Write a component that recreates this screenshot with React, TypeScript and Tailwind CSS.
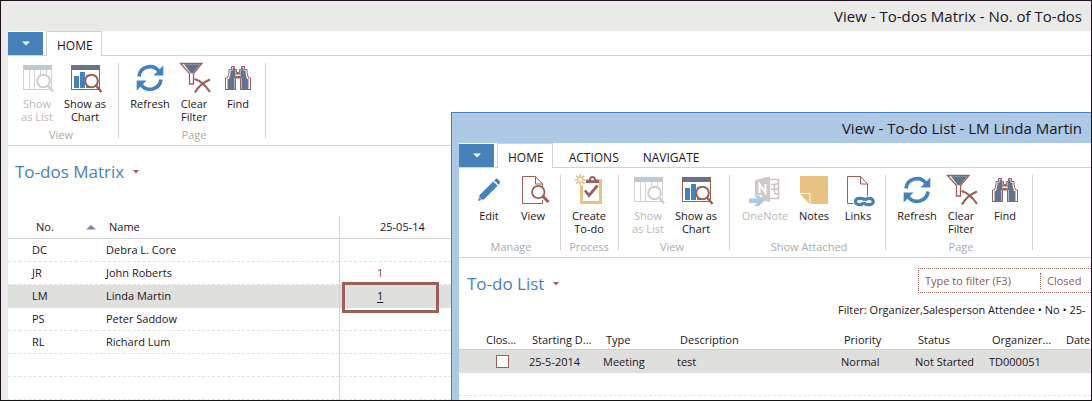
import React from "react";

const BROWN = "#9b6058";
const BLUE = "#4682b9";
const GOLD = "#e8c282";
const MIXED = "#66728c";

function Icon({ children }: { children: React.ReactNode }) {
  return (
    <svg width="32" height="28" viewBox="0 0 32 28" fill="none" aria-hidden="true" className="block overflow-visible">
      {children}
    </svg>
  );
}

function ListIcon() {
  return (
    <Icon>
      <rect x="2.5" y="1.5" width="28" height="24" stroke="#d2d2d2" />
      <rect x="2" y="1" width="29" height="5" fill="#c3c9d3" />
      <path d="M8.5 6V25M13.5 6V25M19.5 6V12M25.5 6V10" stroke="#d2d2d2" />
      <circle cx="22.5" cy="17" r="6.3" fill="#fff" stroke="#cfcfcf" strokeWidth="2" />
      <path d="M27 21.5L32 27.5" stroke="#cfcfcf" strokeWidth="2.5" />
    </Icon>
  );
}

function ChartIcon() {
  return (
    <Icon>
      <rect x="2.5" y="1.5" width="28" height="24" stroke={BROWN} />
      <rect x="3" y="2" width="27" height="3.5" fill={MIXED} />
      <path d="M3 5.5H30" stroke={BROWN} />
      <path d="M5 12h5v12H5zM11 8h5v16h-5zM17 11h5v13h-5z" fill={BLUE} />
      <circle cx="22.5" cy="17" r="6.3" fill="#fff" stroke={BROWN} strokeWidth="2" />
      <path d="M27 21.5L32.5 28" stroke={BROWN} strokeWidth="2.5" />
    </Icon>
  );
}

function RefreshIcon() {
  return (
    <Icon>
      <path d="M5 12.5A11 11 0 0 1 25 7.5" stroke={BLUE} strokeWidth="3.6" />
      <path d="M19.5 11.5H29.3V1.5z" fill={BLUE} />
      <path d="M27 15.5A11 11 0 0 1 7 20.5" stroke={BLUE} strokeWidth="3.6" />
      <path d="M12.5 16.5H2.7V26.5z" fill={BLUE} />
    </Icon>
  );
}

function ClearFilterIcon() {
  return (
    <Icon>
      <path d="M2.5 -.5H24L15.5 9.5V20H11.5V9.5z" fill="#fff" stroke={BROWN} strokeWidth="1.3" />
      <path d="M6 .2H22.3L14.8 9.2H12.8z" fill={MIXED} />
      <path d="M16.5 15C22 16.5 28 22 32 28M32 15.5C26 18 20 23 17 28.5" stroke={BROWN} strokeWidth="2.2" />
    </Icon>
  );
}

function FindIcon() {
  return (
    <Icon>
      <path
        d="M9.5 5.5V2.5H12.5V5.5H14.5V8.5H17.5V5.5H19.5V2.5H22.5V5.5H25V9L26.5 14H28.5V25.5H18.5V14H13.5V25.5H3.5V14H5.5L7 9V5.5z"
        fill="#fff"
        stroke={BROWN}
      />
      <path d="M10.5 3.5H12V6H13.5V14H12.5V25H5.5V15H7L8.5 9V6.5H10.5z" fill={MIXED} />
      <path d="M20 3.5H21.5V6.5H23.5V9L25 15H26.5V25H19.5V14H18.5V6H20z" fill={MIXED} />
      <path d="M13.5 9H18.5V10.5H13.5zM13.5 12H18.5V14H13.5z" fill={BROWN} />
      <path d="M3 25.5H14M18 25.5H29" stroke={BROWN} />
    </Icon>
  );
}

function EditIcon() {
  return (
    <Icon>
      <path d="M5 25L6.8 18.8L20.2 5.4L24.6 9.8L11.2 23.2z" fill={BLUE} />
      <path d="M21.2 4.4L23 2.8H24.5L27 5.4V7L25.6 8.8z" fill={BLUE} />
      <path d="M6 21.3L8.7 24" stroke="#fff" strokeWidth=".8" />
    </Icon>
  );
}

function ViewIcon() {
  return (
    <Icon>
      <path d="M25.5 22V8L18.5 .5H5.5V27.5H25.5V24" stroke={BROWN} />
      <path d="M18.5 .5V8H25.5" stroke={BROWN} />
      <circle cx="21.3" cy="16" r="6.2" fill="#fff" stroke={BROWN} strokeWidth="1.8" />
      <path d="M25.8 20.2L31.5 26" stroke={BROWN} strokeWidth="3" />
    </Icon>
  );
}

function CreateIcon() {
  return (
    <Icon>
      <path d="M7 3H29V28H7z" fill={GOLD} />
      <path d="M10 7H26V25H10z" fill="#fff" />
      <path d="M13 7V4H16C16 1 17.5 0 19.5 0S23 1 23 4H26V7z" fill={BROWN} />
      <circle cx="19.5" cy="3.2" r="1.3" fill="#fff" />
      <path d="M12 14.5L16 19.5L24.5 9.5" stroke={BROWN} strokeWidth="2.8" />
      <circle cx="7.3" cy="3.7" r="6" fill="#fff" />
      <path d="M7.3 -2V9.5M1.5 3.7H13M3.2 -.4L11.4 7.8M11.4 -.4L3.2 7.8" stroke={GOLD} strokeWidth="1.6" />
      <circle cx="7.3" cy="3.7" r="2.6" fill="#fff" stroke={GOLD} strokeWidth="1.2" />
    </Icon>
  );
}

function OneNoteIcon() {
  return (
    <Icon>
      <path d="M21 3.5H29.5V22.5H21" stroke="#cbc3c2" strokeWidth="1.6" />
      <path d="M22 8.5H25.5V18M26 8H29M26 13H29M26 18H29M22 13H25" stroke="#cbc3c2" strokeWidth="1.6" />
      <path d="M6 4L21 .5V26L13 24V19H6z" fill="#cfc8c7" />
      <path d="M10.5 17V8L16.5 17V8" stroke="#fff" strokeWidth="2" />
      <path d="M0 22.5H8L5 19.5H10L15.5 24.8L10 30H5L8 27H0z" fill="#abc8e5" />
    </Icon>
  );
}

function NotesIcon() {
  return (
    <Icon>
      <path d="M2 0H30V28H12L2 17.5z" fill={GOLD} />
      <path d="M2.5 18.5H11.5V28z" fill={GOLD} />
      <path d="M2 17.5H12V28" stroke="#fff" strokeWidth="1" />
    </Icon>
  );
}

function LinksIcon() {
  return (
    <Icon>
      <path d="M11.5 27.5H5.5V.5H18.5L25.5 8V20" stroke={BROWN} />
      <path d="M18.5 .5V8H25.5" stroke={BROWN} />
      <g stroke={BLUE} strokeWidth="3.2">
        <path d="M23 24C21.5 22 19.5 22.3 17 22.3C12.3 22.3 12.3 28.7 17 28.7C19.5 28.7 20.5 28.5 22 26.5" />
        <path d="M21.5 26.5C23 29 25 28.7 27.5 28.7C32.5 28.7 32.5 22.3 27.5 22.3C25 22.3 24 22.5 22.5 24.5" />
      </g>
    </Icon>
  );
}

interface Action {
  label: string[];
  icon: () => React.JSX.Element;
  width: string;
  disabled?: boolean;
}

interface Group {
  name: string;
  pad: string;
  actions: Action[];
}

const viewGroup: Group = {
  name: "View",
  pad: "pl-[5px] pr-[9px]",
  actions: [
    { label: ["Show", "as List"], icon: ListIcon, width: "w-12", disabled: true },
    { label: ["Show as", "Chart"], icon: ChartIcon, width: "w-12" },
  ],
};

const pageGroup: Group = {
  name: "Page",
  pad: "pl-2 pr-1",
  actions: [
    { label: ["Refresh"], icon: RefreshIcon, width: "w-[46px]" },
    { label: ["Clear", "Filter"], icon: ClearFilterIcon, width: "w-[42px]" },
    { label: ["Find"], icon: FindIcon, width: "w-[46px]" },
  ],
};

const matrixGroups: Group[] = [viewGroup, pageGroup];

const listGroups: Group[] = [
  {
    name: "Manage",
    pad: "pl-2 pr-[5px]",
    actions: [
      { label: ["Edit"], icon: EditIcon, width: "w-11" },
      { label: ["View"], icon: ViewIcon, width: "w-11" },
    ],
  },
  {
    name: "Process",
    pad: "pl-1 pr-[5px]",
    actions: [{ label: ["Create", "To-do"], icon: CreateIcon, width: "w-12" }],
  },
  viewGroup,
  {
    name: "Show Attached",
    pad: "pl-2 pr-[5px]",
    actions: [
      { label: ["OneNote"], icon: OneNoteIcon, width: "w-[54px]", disabled: true },
      { label: ["Notes"], icon: NotesIcon, width: "w-11" },
      { label: ["Links"], icon: LinksIcon, width: "w-11" },
    ],
  },
  pageGroup,
];

function Ribbon({ tabs, groups }: { tabs: string[]; groups: Group[] }) {
  return (
    <div className="shrink-0">
      <div className="flex h-[25px] items-end border-b border-[#d2d2d2] pt-px">
        <button type="button" aria-label="Application menu" className="flex h-full w-[35px] items-center justify-center bg-[#4682b9]">
          <svg width="8" height="5" viewBox="0 0 8 5" aria-hidden="true">
            <path d="M0 .5H8L4 4.5z" fill="#fff" />
          </svg>
        </button>
        <nav className="ml-[3px] flex h-6 text-[#1c1420]">
          {tabs.map((tab, i) => (
            <button
              key={tab}
              type="button"
              className={
                i === 0
                  ? "-mb-px h-[25px] border border-b-0 border-[#d2d2d2] bg-white pt-[3px] pr-2 pl-2.5"
                  : "h-[25px] pt-1 pr-2 pl-4"
              }
            >
              {tab}
            </button>
          ))}
        </nav>
      </div>
      <div className="flex h-[90px] border-b border-[#d2d2d2] pt-[7px]">
        {groups.map((group) => (
          <div key={group.name} className="flex shrink-0">
            <section className={`flex flex-col justify-between pb-0.5 ${group.pad}`}>
              <div className="flex text-[11px]">
                {group.actions.map((action) => (
                  <button
                    key={action.label.join(" ")}
                    type="button"
                    disabled={action.disabled}
                    className={`flex shrink-0 flex-col items-center pt-px ${action.width} ${action.disabled ? "text-[#b9b9b9]" : "text-[#1c1420]"}`}
                  >
                    <action.icon />
                    <span className="mt-[5px] flex flex-col leading-[13px] whitespace-nowrap">
                      {action.label.map((line) => (
                        <span key={line}>{line}</span>
                      ))}
                    </span>
                  </button>
                ))}
              </div>
              <h2 className="text-center text-[11px] leading-4 whitespace-nowrap text-[#ababab]">{group.name}</h2>
            </section>
            <span className="h-[75px] w-px bg-[#d2d2d2]" />
          </div>
        ))}
      </div>
    </div>
  );
}

function PageTitle({ children }: { children: string }) {
  return (
    <button type="button" className="flex items-center gap-[9px] text-[17px] leading-6 whitespace-nowrap text-[#4682b9]">
      {children}
      <svg width="6" height="4" viewBox="0 0 6 4" aria-hidden="true">
        <path d="M0 0H6L3 3.5z" fill={BROWN} />
      </svg>
    </button>
  );
}

const people = [
  { no: "DC", name: "Debra L. Core", count: "" },
  { no: "JR", name: "John Roberts", count: "1" },
  { no: "LM", name: "Linda Martin", count: "1" },
  { no: "PS", name: "Peter Saddow", count: "" },
  { no: "RL", name: "Richard Lum", count: "" },
  { no: "", name: "", count: "" },
  { no: "", name: "", count: "" },
];

function MatrixTable() {
  return (
    <table className="w-full table-fixed border-separate border-spacing-0 text-left text-[11px] text-[#1c1420]">
      <colgroup>
        <col className="w-[95px]" />
        <col className="w-[236px]" />
        <col />
      </colgroup>
      <thead>
        <tr className="h-[23px]">
          <th className="border-b border-[#d2d2d2] p-0 pl-7 font-normal">
            <span className="flex items-center justify-between pr-[7px]">
              No.
              <svg width="10" height="5" viewBox="0 0 10 5" aria-hidden="true">
                <path d="M0 4.5L5 0L10 4.5z" fill="#8088a0" />
              </svg>
            </span>
          </th>
          <th className="border-b border-[#d2d2d2] p-0 pl-1.5 font-normal">Name</th>
          <th className="border-b border-l border-[#d2d2d2] p-0 pl-10 font-normal">25-05-14</th>
        </tr>
      </thead>
      <tbody>
        {people.map((p, i) => {
          const selected = p.no === "LM";
          const line = selected ? "border-b border-b-[#dfdfde] bg-[#dfdfde]" : "border-b border-dashed border-b-[#e2e2e2]";
          return (
            <tr key={i} className="h-[23px]">
              <td className={`p-0 pl-6 ${line}`}>{p.no}</td>
              <td className={`p-0 pl-[3px] ${line}`}>{p.name}</td>
              <td className={`relative border-l border-l-[#d2d2d2] p-0 pl-[37px] [border-left-style:solid]! ${line}`}>
                {selected ? (
                  <>
                    <a href="#todo-list" className="underline underline-offset-2">
                      {p.count}
                    </a>
                    <span className="pointer-events-none absolute -top-[3px] left-0.5 h-[31px] w-[97px] border-[3px] border-[#9b6058]" />
                  </>
                ) : (
                  <span className="text-[#7d4b48]">{p.count}</span>
                )}
              </td>
            </tr>
          );
        })}
      </tbody>
    </table>
  );
}

const listHeaders = ["Clos...", "Starting D...", "Type", "Description", "Priority", "Status", "Organizer...", "Date"];
const listValues = ["25-5-2014", "Meeting", "test", "Normal", "Not Started", "TD000051", ""];

function TodoTable() {
  return (
    <table className="w-full table-fixed border-separate border-spacing-0 text-left text-[11px] whitespace-nowrap text-[#1c1420]">
      <colgroup>
        <col className="w-[67px]" />
        <col className="w-[74px]" />
        <col className="w-[74px]" />
        <col className="w-[164px]" />
        <col className="w-[74px]" />
        <col className="w-[74px]" />
        <col className="w-[74px]" />
        <col />
      </colgroup>
      <thead>
        <tr className="h-[23px]">
          {listHeaders.map((h, i) => (
            <th key={h} className={`border-b border-[#d2d2d2] p-0 pt-[3px] font-normal ${i === 0 ? "pl-[27px]" : "pl-1.5"}`}>
              {h}
            </th>
          ))}
        </tr>
      </thead>
      <tbody>
        <tr className="h-[23px] bg-[#dfdfde]">
          <td className="p-0 pl-[37px]">
            <input type="checkbox" aria-label="Closed" className="block size-[13px] appearance-none border border-[#9b6058] bg-white" />
          </td>
          {listValues.map((v, i) => (
            <td key={i} className="p-0 pl-[3px]">
              {v}
            </td>
          ))}
        </tr>
        <tr className="h-[23px]">
          <td colSpan={8} className="border-b border-dashed border-[#e2e2e2] p-0" />
        </tr>
      </tbody>
    </table>
  );
}

function TodoListWindow() {
  return (
    <section
      id="todo-list"
      className="absolute top-[111px] right-0 bottom-0 left-[450px] flex flex-col overflow-hidden border-t border-l border-[#4682b9] bg-[#adc9e5] pl-[7px]"
    >
      <h1 className="h-[30px] shrink-0 pr-[9px] text-right text-[15px] leading-[30px] whitespace-nowrap text-[#1c1420]">
        View - To-do List - LM Linda Martin
      </h1>
      <div className="flex flex-1 flex-col bg-white">
        <Ribbon tabs={["HOME", "ACTIONS", "NAVIGATE"]} groups={listGroups} />
        <div className="flex justify-between pt-2.5">
          <div className="pt-1 pl-2">
            <PageTitle>To-do List</PageTitle>
          </div>
          <div className="w-[173px]">
            <div className="flex h-[25px] items-center border border-r-0 border-dotted border-[#9b6058] text-[#8d5a54]">
              <input
                type="text"
                aria-label="Type to filter"
                placeholder="Type to filter (F3)"
                className="w-[122px] border-r border-dotted border-[#9b6058] bg-transparent pl-1.5 text-[11px] placeholder:text-[#8d5a54] focus:outline-none"
              />
              <select aria-label="Filter field" className="flex-1 appearance-none bg-transparent pl-1.5 text-[11px]">
                <option>Closed</option>
              </select>
            </div>
          </div>
        </div>
        <div className="flex h-[31px] justify-end pt-1.5 text-[11px] leading-4 whitespace-nowrap text-[#1c1420]">
          <p className="w-[253px]">Filter: Organizer,Salesperson Attendee • No • 25-</p>
        </div>
        <TodoTable />
      </div>
    </section>
  );
}

export default function App() {
  return (
    <main className="relative flex h-screen flex-col overflow-hidden border border-[#1f1020] bg-[#eaeae9] pl-[7px] font-['Open_Sans','Noto_Sans',sans-serif] text-[12px] leading-4">
      <h1 className="h-[30px] shrink-0 pr-[9px] text-right text-[15px] leading-[30px] whitespace-nowrap text-[#1c1420]">
        View - To-dos Matrix - No. of To-dos
      </h1>
      <div className="flex min-h-0 flex-1 flex-col bg-white">
        <Ribbon tabs={["HOME"]} groups={matrixGroups} />
        <div className="h-[70px] shrink-0 pt-3.5 pl-[7px]">
          <PageTitle>To-dos Matrix</PageTitle>
        </div>
        <MatrixTable />
      </div>
      <TodoListWindow />
    </main>
  );
}
